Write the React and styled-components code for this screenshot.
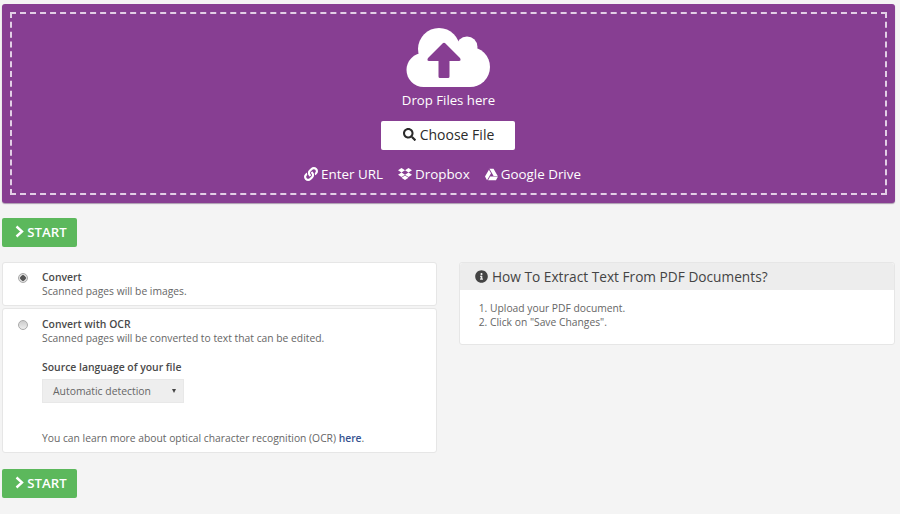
import React from 'react'
import styled, { createGlobalStyle } from 'styled-components'
import { FaSearch, FaLink, FaDropbox, FaInfoCircle, FaGoogleDrive } from 'react-icons/fa'

const Global = createGlobalStyle`
  html, body {
    margin: 0;
    padding: 0;
    background: #f4f4f4;
  }
  body {
    font-family: "Open Sans", "Liberation Sans", sans-serif;
    font-size: 11px;
    color: #5a5a5a;
  }
`

const Page = styled.div`
  width: 900px;
  height: 514px;
  overflow: hidden;
  box-sizing: border-box;
  padding: 4px 5px 0 2px;
`

const DropZone = styled.div`
  height: 199px;
  box-sizing: border-box;
  padding: 8px;
  background: #873e92;
  border-radius: 3px;
  box-shadow: 0 1px 1px rgba(60, 20, 70, 0.4);
`

const DropInner = styled.div`
  height: 100%;
  box-sizing: border-box;
  border: 2px dashed #e3cfe6;
  display: flex;
  flex-direction: column;
  align-items: center;
  color: #fff;
  padding-top: 13px;
`

const DropText = styled.div`
  font-size: 13.2px;
  line-height: 18px;
  margin-top: 2px;
`

const ChooseButton = styled.button`
  width: 134px;
  height: 29px;
  margin: 12px 1px 0 0;
  background: #fff;
  color: #2b2b2b;
  border: 0;
  border-radius: 2px;
  font-family: inherit;
  font-size: 14px;
  font-weight: 500;
  display: flex;
  align-items: center;
  justify-content: center;
  gap: 4px;
  padding: 0 0 2px 1px;
`

const Sources = styled.div`
  display: flex;
  gap: 15px;
  margin-top: 15px;
  padding-right: 12px;
  font-size: 13.4px;
  line-height: 18px;
`

const Source = styled.span`
  display: inline-flex;
  align-items: center;
  gap: 3px;
`

const StartButton = styled.button`
  width: 75px;
  height: 29px;
  margin-top: ${p => p.$top}px;
  display: flex;
  align-items: center;
  justify-content: center;
  gap: 3px;
  background: #5cb85c;
  color: #fff;
  border: 0;
  border-radius: 2px;
  font-family: inherit;
  font-size: 13.2px;
  font-weight: 600;
  padding: 0 0 2px 3px;
`

const Columns = styled.div`
  display: grid;
  grid-template-columns: 435px 436px;
  column-gap: 22px;
  margin-top: 15px;
`

const Stack = styled.div`
  display: flex;
  flex-direction: column;
  gap: 2px;
`

const Panel = styled.div`
  background: #fff;
  border: 1px solid #e6e6e6;
  border-radius: 3px;
  box-sizing: border-box;
`

const OptionPanel = styled(Panel)`
  height: ${p => p.$height}px;
  display: grid;
  grid-template-columns: 39px 1fr;
  padding-top: ${p => p.$top}px;
`

const Radio = styled.span`
  width: 10px;
  height: 10px;
  margin: 3px 0 0 15px;
  border-radius: 50%;
  box-sizing: border-box;
  border: 1px solid #aaa;
  background: ${p => (p.$on ? 'radial-gradient(circle, #555 0 2.5px, #ddd 3px)' : 'linear-gradient(#ccc, #eee)')};
`

const OptionTitle = styled.div`
  font-weight: 600;
  font-size: 10.4px;
  line-height: 14px;
  color: #4a4a4a;
`

const OptionText = styled.div`
  font-size: 10.3px;
  line-height: 14px;
  color: #666;
`

const FieldLabel = styled(OptionTitle)`
  margin-top: 15px;
`

const Select = styled.div`
  width: 142px;
  height: 24px;
  margin-top: 5px;
  box-sizing: border-box;
  padding: 0 7px 0 10px;
  display: flex;
  align-items: center;
  justify-content: space-between;
  background: #eee;
  border: 1px solid #e8e8e8;
  font-size: 10.4px;
  color: #666;
`

const Caret = styled.span`
  width: 0;
  height: 0;
  border-left: 2px solid transparent;
  border-right: 2px solid transparent;
  border-top: 4px solid #444;
`

const Note = styled(OptionText)`
  margin-top: 28px;
`

const Here = styled.a`
  color: #35528f;
  font-weight: 600;
`

const HelpHead = styled.div`
  height: 27px;
  box-sizing: border-box;
  display: flex;
  align-items: center;
  gap: 4px;
  padding: 0 0 1px 15px;
  background: #ededed;
  font-size: 13.7px;
  font-weight: 400;
  color: #444;
  border-radius: 3px 3px 0 0;
`

const HelpBody = styled.ol`
  margin: 0;
  padding: 11px 0 15px 30px;
  font-size: 10.3px;
  line-height: 14px;
  color: #666;
`

// cloud with the arrow knocked out in the dropzone colour
const CloudIcon = () => (
  <svg width="85" height="62" viewBox="0 0 85 62">
    <g fill="#fff">
      <circle cx="33" cy="22" r="21" />
      <circle cx="61" cy="20" r="10.500" />
      <circle cx="17.500" cy="43" r="17" />
      <circle cx="64" cy="40" r="20" />
      <rect x="17" y="24" width="47" height="36" />
    </g>
    <path
      fill="#873e92"
      d="M36.500 16.500 Q38 15 39.500 16.500 L54 31 Q55.500 34 53 34 L43.500 34 L43.500 49.500 Q43.500 51 42 51 L34 51 Q32.500 51 32.500 49.500 L32.500 34 L23 34 Q20.500 34 22 31 Z"
    />
  </svg>
)

const Chevron = () => (
  <svg width="9" height="13" viewBox="0 0 9 13">
    <path d="M1.500 1.500 L7 6.500 L1.500 11.500" fill="none" stroke="#fff" strokeWidth="2.400" />
  </svg>
)

const App = () => (
  <Page>
    <Global />
    <DropZone>
      <DropInner>
        <CloudIcon />
        <DropText>Drop Files here</DropText>
        <ChooseButton>
          <FaSearch size={13} /> Choose File
        </ChooseButton>
        <Sources>
          <Source>
            <FaLink size={14} /> Enter URL
          </Source>
          <Source>
            <FaDropbox size={14} /> Dropbox
          </Source>
          <Source>
            <FaGoogleDrive size={13} /> Google Drive
          </Source>
        </Sources>
      </DropInner>
    </DropZone>

    <StartButton $top={15}>
      <Chevron /> START
    </StartButton>

    <Columns>
      <Stack>
        <OptionPanel $height={44} $top={7}>
          <Radio $on />
          <div>
            <OptionTitle>Convert</OptionTitle>
            <OptionText>Scanned pages will be images.</OptionText>
          </div>
        </OptionPanel>
        <OptionPanel $height={145} $top={8}>
          <Radio />
          <div>
            <OptionTitle>Convert with OCR</OptionTitle>
            <OptionText>Scanned pages will be converted to text that can be edited.</OptionText>
            <FieldLabel>Source language of your file</FieldLabel>
            <Select>
              Automatic detection
              <Caret />
            </Select>
            <Note>
              You can learn more about optical character recognition (OCR) <Here>here</Here>.
            </Note>
          </div>
        </OptionPanel>
      </Stack>
      <div>
        <Panel>
          <HelpHead>
            <FaInfoCircle size={13} /> How To Extract Text From PDF Documents?
          </HelpHead>
          <HelpBody>
            <li>Upload your PDF document.</li>
            <li>Click on "Save Changes".</li>
          </HelpBody>
        </Panel>
      </div>
    </Columns>

    <StartButton $top={16}>
      <Chevron /> START
    </StartButton>
  </Page>
)

export default App
